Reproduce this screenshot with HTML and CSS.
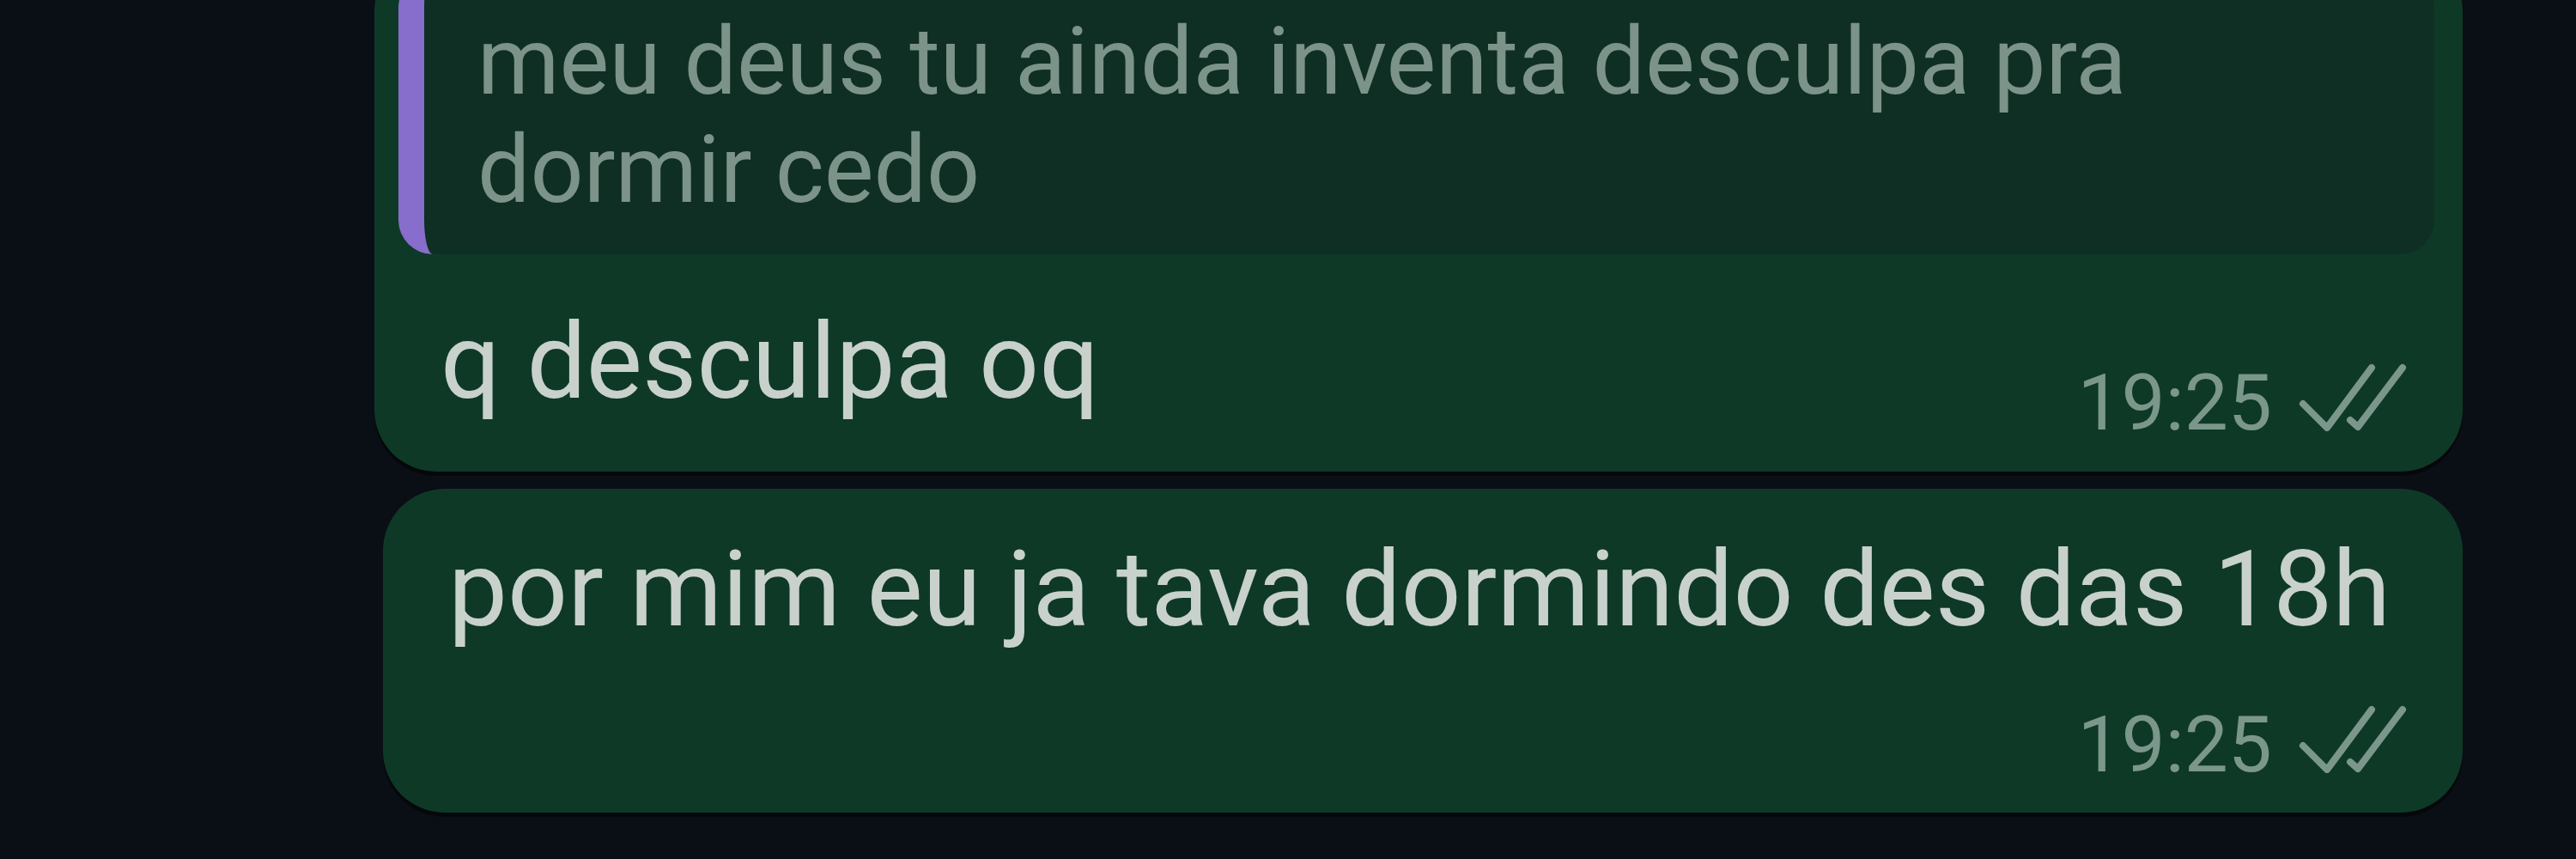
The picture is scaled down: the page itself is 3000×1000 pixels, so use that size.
FILE: index.html
```
<!DOCTYPE html>
<html lang="pt-BR">
<head>
    <meta charset="UTF-8">
    <meta name="viewport" content="width=device-width, initial-scale=1.0">
    <title>Conversa</title>
    <link rel="stylesheet" href="styles.css">
</head>
<body>
    <div class="chat">
        <div class="bubble bubble-reply">
            <div class="quote">
                <p class="quote-text">meu deus tu ainda inventa desculpa pra dormir cedo</p>
            </div>
            <div class="msg-row">
                <p class="msg-text">q desculpa oq</p>
                <div class="meta">
                    <span class="time">19:25</span>
                    <svg class="ticks" viewBox="0 0 128 80" width="128" height="80">
                        <path d="M6 48 L34 76 L86 6" />
                        <path d="M61 67 L70 75 L122 6" />
                    </svg>
                </div>
            </div>
        </div>

        <div class="bubble bubble-solo">
            <p class="msg-text">por mim eu ja tava dormindo des das 18h</p>
            <div class="meta meta-below">
                <span class="time">19:25</span>
                <svg class="ticks" viewBox="0 0 128 80" width="128" height="80">
                    <path d="M6 48 L34 76 L86 6" />
                    <path d="M61 67 L70 75 L122 6" />
                </svg>
            </div>
        </div>
    </div>
</body>
</html>
```

FILE: styles.css
```
body {
    margin: 0;
    padding: 0;
    background: #0a0e15;
    font-family: Roboto, "Noto Sans", sans-serif;
    overflow: hidden;
}
.chat {
    height: 100vh;
    display: flex;
    flex-direction: column;
    justify-content: flex-end;
    align-items: flex-end;
    gap: 20px;
    padding: 0 132px 54px 0;
    box-sizing: border-box;
}
.bubble {
    background: #0e3927;
    border-radius: 72px;
    box-shadow: 0 5px 0 rgba(0, 0, 0, 0.45);
    box-sizing: border-box;
    flex-shrink: 0;
}
p {
    margin: 0;
}
.bubble-reply {
    width: 2432px;
    padding: 28px 33px 28px 28px;
}
.quote {
    background: #0f2f24;
    border-left: 30px solid #876dcc;
    border-radius: 40px;
    padding: 40px 120px 35px 62px;
}
.quote-text {
    color: #7c9389;
    font-size: 109px;
    line-height: 126px;
}
.msg-row {
    display: flex;
    justify-content: space-between;
    align-items: flex-end;
    margin-top: 54px;
    padding: 0 31px 0 49px;
}
.msg-text {
    color: #c9d1cd;
    font-size: 123px;
    line-height: 143px;
    white-space: nowrap;
}
.msg-row .msg-text {
    margin-bottom: 28px;
}
.meta {
    display: flex;
    align-items: flex-start;
    gap: 30px;
}
.time {
    color: #7b978b;
    font-size: 91px;
    line-height: 104px;
}
.ticks {
    margin-top: 5px;
    fill: none;
    stroke: #7b978b;
    stroke-width: 8;
    stroke-linecap: round;
    stroke-linejoin: round;
}
.bubble-solo {
    padding: 46px 64px 27px 76px;
}
.bubble-solo .msg-text {
    padding-right: 20px;
}
.meta-below {
    justify-content: flex-end;
    margin-top: 57px;
}
```
